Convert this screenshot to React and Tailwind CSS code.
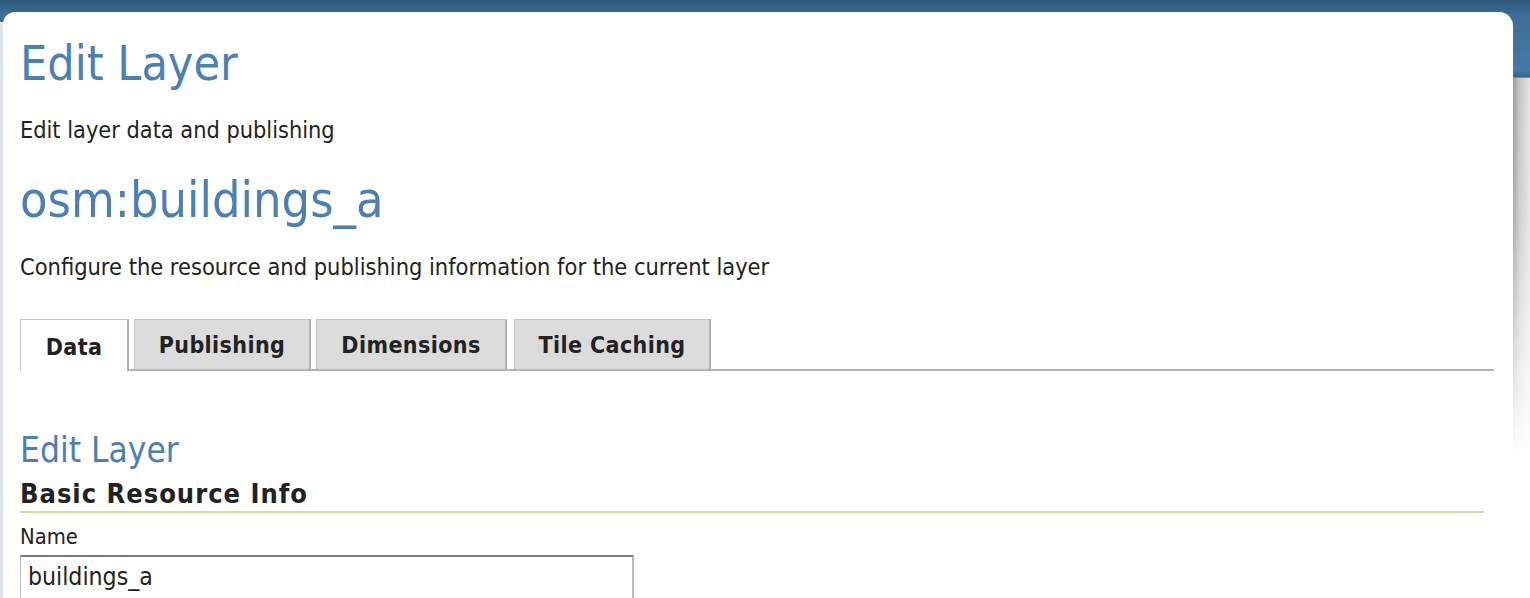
import React from "react";

const font = { fontFamily: '"DejaVu Sans Condensed", "DejaVu Sans", Verdana, sans-serif' };

function Tab({ label, active, w }) {
  return active ? (
    <div className={`${w} h-[52px] flex items-center justify-center bg-white border-l border-t border-[#c8c8c8] border-r-2 border-r-[#b0b0b0] -mb-[2px] relative z-10 text-[23px] tracking-[0.4px] font-bold text-[#222] pt-[4px]`}>
      {label}
    </div>
  ) : (
    <div className={`${w} h-[50px] flex items-center justify-center bg-[#dcdcdc] border-l border-t border-[#c4c4c4] border-r-2 border-r-[#b0b0b0] text-[23px] tracking-[0.4px] font-bold text-[#222] pt-[2px]`}>
      {label}
    </div>
  );
}

export default function App() {
  return (
    <div
      className="w-[1530px] h-[598px] overflow-hidden bg-[linear-gradient(to_bottom,#2c557a_0px,#3e6c96_14px,#4679a8_70px,#3a6389_77px,#ffffff_79px)]"
      style={font}
    >
      <div className="h-[12px]" />
      <div className="flex h-[586px]">
        <div className="w-[3px] bg-[#dde4ea] mt-[10px]" />
        <div className="w-[1510px] bg-white rounded-tl-[12px] rounded-tr-[14px] pl-[17px] pr-[19px] overflow-hidden">
          <h1 className="text-[48px] leading-[1] h-[48px] text-[#4a80b5] mt-[27px]">Edit Layer</h1>
          <p className="text-[23.3px] leading-[1] h-[23px] text-[#222] mt-[31px]">Edit layer data and publishing</p>
          <h2 className="text-[50px] leading-[1] h-[50px] text-[#4a80b5] mt-[34px]">osm:buildings_a</h2>
          <p className="text-[23.4px] leading-[1] h-[23px] text-[#222] mt-[31px]">
            Configure the resource and publishing information for the current layer
          </p>
          <div className="mt-[40px] flex items-end border-b-2 border-[#b4b4b4]">
            <Tab label="Data" active w="w-[109px]" />
            <div className="ml-[5px]"><Tab label="Publishing" w="w-[177px]" /></div>
            <div className="ml-[5px]"><Tab label="Dimensions" w="w-[191px]" /></div>
            <div className="ml-[7px]"><Tab label="Tile Caching" w="w-[197px]" /></div>
          </div>
          <h3 className="text-[35px] leading-[1] h-[35px] text-[#4a80b5] mt-[62px]">Edit Layer</h3>
          <div className="mr-[10px] border-b-2 border-[#cfdf9c] mt-[12px] pb-[4px]">
            <div className="text-[27px] tracking-[1px] font-bold text-[#222] leading-[1] h-[27px]">Basic Resource Info</div>
          </div>
          <div className="text-[21.8px] leading-[1] h-[22px] text-[#222] mt-[13px]">Name</div>
          <div className="w-[614px] h-[60px] mt-[7px] border-t-2 border-l border-r-2 border-t-[#7a7a7a] border-l-[#bdbdbd] border-r-[#bdbdbd] px-[7px] pt-[8px] text-[24.6px] leading-[1] text-[#222]">
            buildings_a
          </div>
        </div>
        <div className="w-[17px] flex flex-col">
          <div className="h-[66px]" />
          <div className="h-[380px] bg-[linear-gradient(to_bottom,rgba(255,255,255,0)_0%,rgba(255,255,255,0.2)_40%,#ffffff_100%),linear-gradient(to_right,#9a9a9a,#c8c8c8_40%,#e4e4e4)]" />
        </div>
      </div>
    </div>
  );
}
